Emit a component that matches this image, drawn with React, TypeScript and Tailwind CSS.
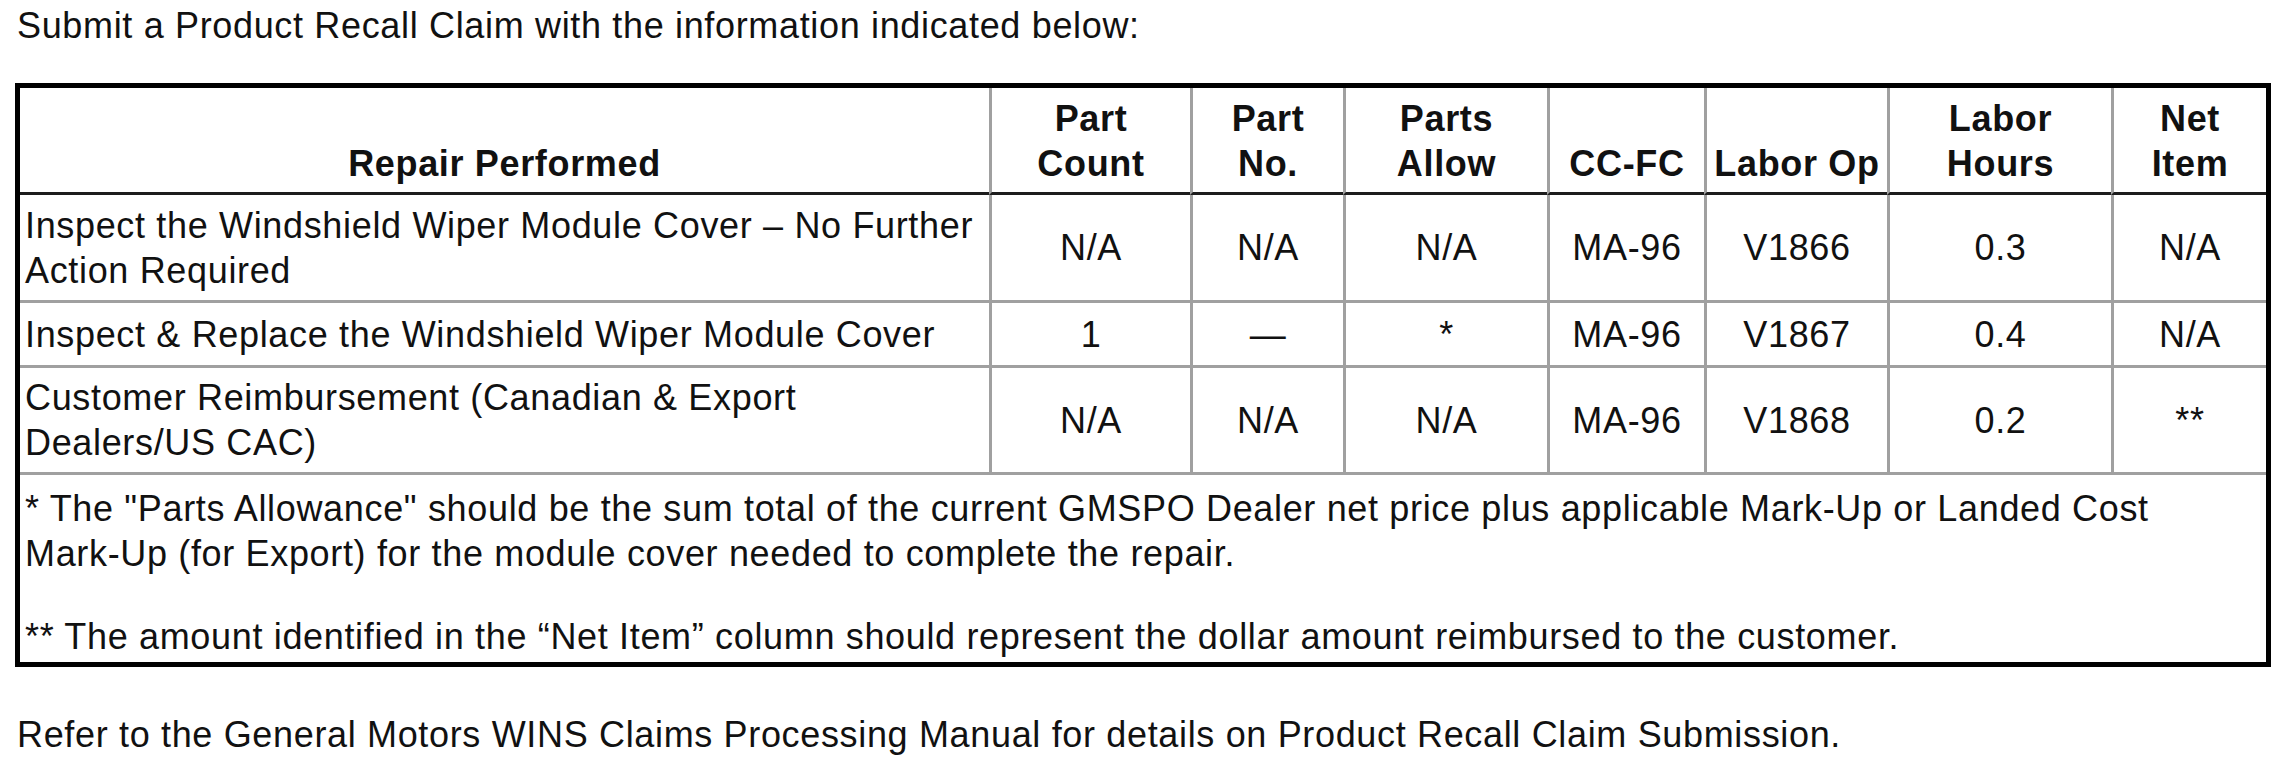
import type { ReactNode } from "react";

// Recall claim table: one header row, three repair rows and a notes
// block that spans every column. Sizes are in page pixels.

type Row = {
  repair: ReactNode;
  values: string[];
  height: string;
};

const headers: ReactNode[] = [
  "Repair Performed",
  <>Part<br />Count</>,
  <>Part<br />No.</>,
  <>Parts<br />Allow</>,
  "CC-FC",
  "Labor Op",
  <>Labor<br />Hours</>,
  <>Net<br />Item</>,
];

const rows: Row[] = [
  {
    repair: <>Inspect the Windshield Wiper Module Cover – No Further<br />Action Required</>,
    values: ["N/A", "N/A", "N/A", "MA-96", "V1866", "0.3", "N/A"],
    height: "h-[108px]",
  },
  {
    repair: "Inspect & Replace the Windshield Wiper Module Cover",
    values: ["1", "—", "*", "MA-96", "V1867", "0.4", "N/A"],
    height: "h-[65px]",
  },
  {
    repair: <>Customer Reimbursement (Canadian &amp; Export<br />Dealers/US CAC)</>,
    values: ["N/A", "N/A", "N/A", "MA-96", "V1868", "0.2", "**"],
    height: "h-[107px]",
  },
];

function HeaderCell({ children, first }: { children: ReactNode; first: boolean }) {
  return (
    <div
      className={`flex h-[107px] flex-col items-center justify-end border-b-[3px] border-b-[#1c1c1c] pb-[6px] text-center font-bold ${
        first ? "" : "border-l-[3px] border-l-[#a0a0a0]"
      }`}
    >
      <div>{children}</div>
    </div>
  );
}

function DataRow({ row }: { row: Row }) {
  return (
    <>
      <div className={`flex items-center whitespace-nowrap border-b-[3px] border-b-[#a0a0a0] pl-[5px] ${row.height}`}>
        <div>{row.repair}</div>
      </div>
      {row.values.map((v, i) => (
        <div
          key={i}
          className={`flex items-center justify-center border-b-[3px] border-l-[3px] border-b-[#a0a0a0] border-l-[#a0a0a0] ${row.height}`}
        >
          {v}
        </div>
      ))}
    </>
  );
}

export default function App() {
  return (
    <div className="min-h-[769px] w-[2293px] bg-white pl-[15px] font-['Liberation_Sans',Arial,sans-serif] text-[36px] leading-[45px] tracking-[0.66px] text-[#111]">
      <p className="pl-[2px] pt-[3px]">Submit a Product Recall Claim with the information indicated below:</p>

      <div className="mt-[35px] w-[2256px] border-[5px] border-black">
        <div className="grid grid-cols-[969px_201px_153px_204px_157px_183px_224px_155px]">
          {headers.map((h, i) => (
            <HeaderCell key={i} first={i === 0}>
              {h}
            </HeaderCell>
          ))}
          {rows.map((r, i) => (
            <DataRow key={i} row={r} />
          ))}
          <div className="col-span-8 h-[187px] whitespace-nowrap pl-[5px] pt-[11px]">
            <p>
              * The "Parts Allowance" should be the sum total of the current GMSPO Dealer net price plus applicable Mark-Up or Landed Cost
              <br />
              Mark-Up (for Export) for the module cover needed to complete the repair.
            </p>
            <p className="mt-[38px]">
              ** The amount identified in the “Net Item” column should represent the dollar amount reimbursed to the customer.
            </p>
          </div>
        </div>
      </div>

      <p className="mt-[45px] pl-[2px]">
        Refer to the General Motors WINS Claims Processing Manual for details on Product Recall Claim Submission.
      </p>
    </div>
  );
}
